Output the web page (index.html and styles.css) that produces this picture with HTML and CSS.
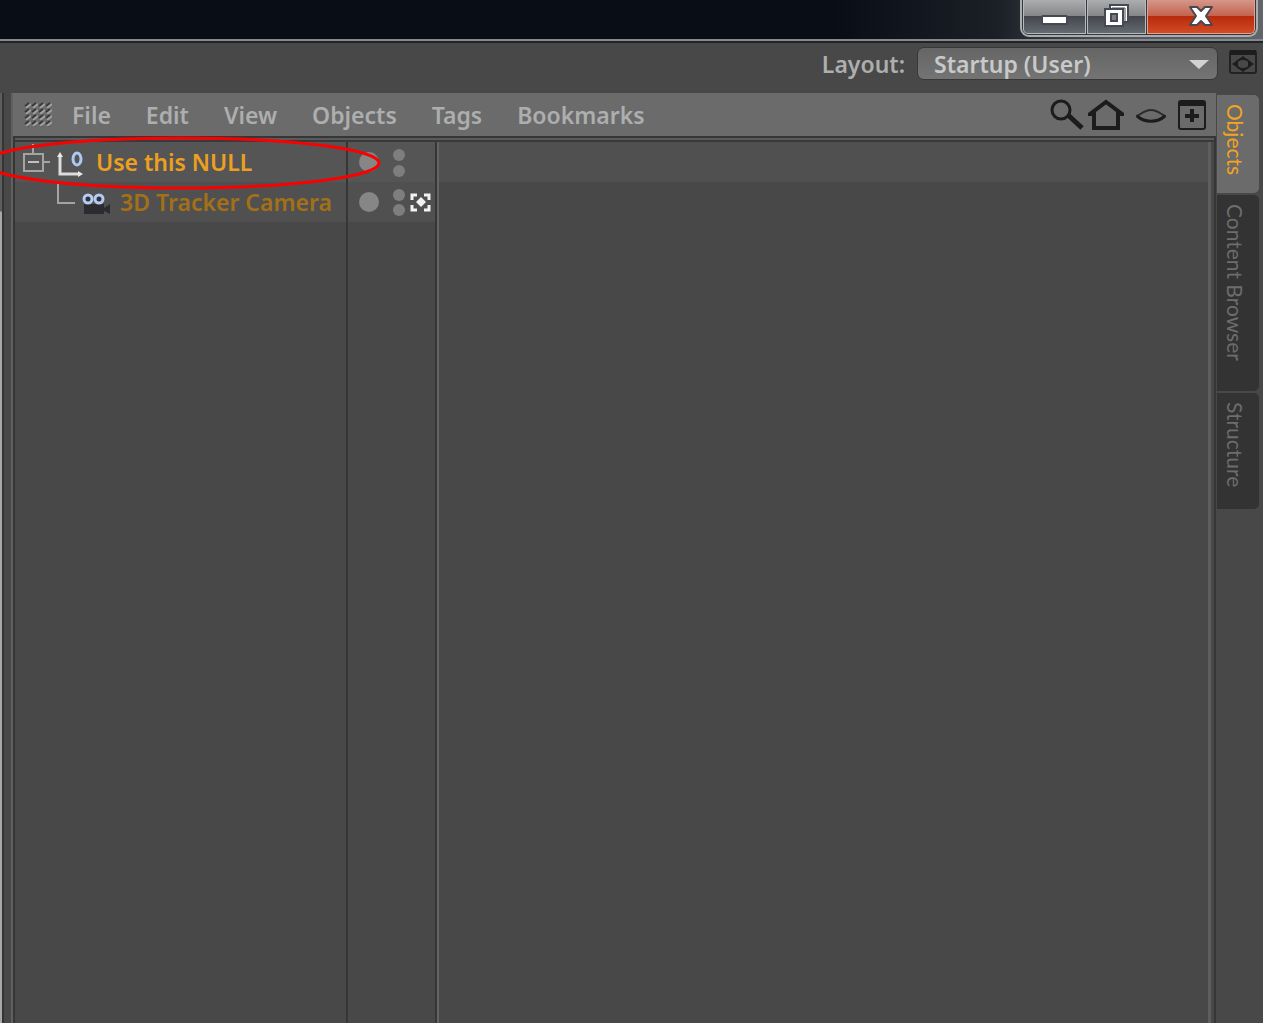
FILE: index.html
```html
<!DOCTYPE html>
<html lang="en">
<head>
    <meta charset="UTF-8">
    <meta name="viewport" content="width=device-width, initial-scale=1.0">
    <title>Object Manager</title>
    <link rel="stylesheet" href="styles.css">
</head>
<body>
    <header class="titlebar">
        <div class="window-buttons">
            <button class="win-btn" aria-label="Minimize">
                <svg width="30" height="30" viewBox="0 0 30 30"><rect x="2" y="16" width="25" height="8" rx="1" fill="#fff" stroke="#454954" stroke-width="2"/></svg>
            </button>
            <button class="win-btn" aria-label="Restore">
                <svg width="30" height="30" viewBox="0 0 30 30">
                    <path d="M8 5h18v17h-18z" fill="#fff" stroke="#454954" stroke-width="2"/>
                    <path d="M10 8h13v13" fill="none" stroke="#454954" stroke-width="1"/>
                    <path d="M3 9h18v17H3z" fill="#fff" stroke="#454954" stroke-width="2"/>
                    <rect x="9" y="14" width="6" height="7" fill="#7a7d86" stroke="#454954" stroke-width="2"/>
                </svg>
            </button>
            <button class="win-btn close" aria-label="Close">
                <svg width="30" height="30" viewBox="0 0 30 30"><path d="M4 7h7l4 4 4-4h7l-6 9 6 9h-7l-4-4-4 4H4l6-9z" fill="#fff" stroke="#4b4650" stroke-width="2" stroke-linejoin="round"/></svg>
            </button>
        </div>
    </header>

    <div class="layout-bar">
        <label for="layout">Layout:</label>
        <div class="select-wrap">
            <select id="layout">
                <option>Startup (User)</option>
            </select>
            <svg class="arrow" width="20" height="10" viewBox="0 0 20 10"><path d="M0 0h20l-10 9z" fill="#d2d2d2"/></svg>
        </div>
        <button class="icon-btn" aria-label="Full screen">
            <svg width="28" height="26" viewBox="0 0 28 26">
                <rect x="1" y="2" width="26" height="22" rx="2" fill="#484848" stroke="#222" stroke-width="2"/>
                <path d="M1 1h26v5H1z" fill="#1d1d1d"/>
                <path d="M14 7l5 4H9zM14 23l5-4H9zM3 15l6-4v8zM25 15l-6-4v8z" fill="#1d1d1d"/>
                <ellipse cx="14" cy="15" rx="7" ry="5" fill="none" stroke="#1d1d1d" stroke-width="2"/>
            </svg>
        </button>
    </div>

    <main class="workspace">
        <div class="side-edge"></div>

        <section class="manager">
            <nav class="menu">
                <svg class="grip" width="28" height="25" viewBox="0 0 28 25">
                    <defs>
                        <pattern id="dots" width="7" height="6" patternUnits="userSpaceOnUse">
                            <path d="M1 4l4-3" stroke="#383838" stroke-width="2"/>
                            <path d="M2 6l5-4" stroke="#a0a0a0" stroke-width="2"/>
                        </pattern>
                    </defs>
                    <rect width="28" height="25" fill="url(#dots)"/>
                </svg>
                <button>File</button>
                <button>Edit</button>
                <button>View</button>
                <button>Objects</button>
                <button>Tags</button>
                <button>Bookmarks</button>
                <div class="tools">
                    <button aria-label="Search">
                        <svg width="34" height="32" viewBox="0 0 34 32">
                            <circle cx="11" cy="11" r="9" fill="none" stroke="#1c1c1c" stroke-width="3"/>
                            <path d="M18 16l14 13" stroke="#1c1c1c" stroke-width="5"/>
                        </svg>
                    </button>
                    <button aria-label="Home">
                        <svg width="36" height="32" viewBox="0 0 36 32"><path d="M2 15L18 3l16 12h-4v14H6V15z" fill="none" stroke="#1c1c1c" stroke-width="4"/></svg>
                    </button>
                    <button aria-label="View filter">
                        <svg width="30" height="32" viewBox="0 0 30 32">
                            <path d="M0 17c4 0 7-6 15-6s11 6 15 6" fill="none" stroke="#2b2b2b" stroke-width="2"/>
                            <path d="M1 17c8 7 20 7 28 0" fill="none" stroke="#1c1c1c" stroke-width="3"/>
                        </svg>
                    </button>
                    <button aria-label="New panel">
                        <svg width="28" height="32" viewBox="0 0 28 32">
                            <rect x="1" y="2" width="26" height="28" rx="2" fill="none" stroke="#1c1c1c" stroke-width="2"/>
                            <path d="M1 2h26v5H1z" fill="#1c1c1c"/>
                            <path d="M14 10v13M7 17h14" stroke="#1c1c1c" stroke-width="4"/>
                        </svg>
                    </button>
                </div>
            </nav>

            <div class="tree">
                <div class="names">
                    <div class="row selected">
                        <svg width="81" height="40" viewBox="0 0 81 40">
                            <path d="M18 2v10M28 20h7" stroke="#a4a4a4" stroke-width="2"/>
                            <rect x="9" y="12" width="19" height="17" fill="none" stroke="#a4a4a4" stroke-width="2"/>
                            <path d="M13 20h11" stroke="#c0c0c0" stroke-width="2"/>
                            <path d="M45 14v18h20" fill="none" stroke="#dcdcdc" stroke-width="3"/>
                            <path d="M42 15l3-5 3 5zM63 29l5 3-5 3z" fill="#e8e8e8"/>
                            <ellipse cx="62" cy="17" rx="4" ry="6" fill="none" stroke="#adc8f2" stroke-width="3"/>
                        </svg>
                        <span>Use this NULL</span>
                    </div>
                    <div class="row child">
                        <svg width="105" height="40" viewBox="0 0 105 40">
                            <path d="M43 1v20h17" fill="none" stroke="#a4a4a4" stroke-width="2"/>
                            <path d="M69 22h20v4l6-4v10l-6-3v3H69z" fill="#2c2c30"/>
                            <circle cx="73" cy="17" r="4" fill="#333" stroke="#b4ccf4" stroke-width="3"/>
                            <circle cx="84" cy="17" r="4" fill="#333" stroke="#b4ccf4" stroke-width="3"/>
                        </svg>
                        <span>3D Tracker Camera</span>
                    </div>
                </div>
                <div class="flags">
                    <div class="row selected">
                        <svg width="86" height="40" viewBox="0 0 86 40">
                            <circle cx="21" cy="20" r="10" fill="#868686"/>
                            <circle cx="51" cy="13" r="6" fill="#7e7e7e"/>
                            <circle cx="51" cy="29" r="6" fill="#7e7e7e"/>
                        </svg>
                    </div>
                    <div class="row child">
                        <svg width="86" height="40" viewBox="0 0 86 40">
                            <circle cx="21" cy="20" r="10" fill="#868686"/>
                            <circle cx="51" cy="13" r="6" fill="#7e7e7e"/>
                            <circle cx="51" cy="28" r="6" fill="#7e7e7e"/>
                            <path d="M64 18v-5h5M76 13h5v5M81 23v5h-5M69 28h-5v-5" fill="none" stroke="#f2f2f2" stroke-width="3"/>
                            <path d="M73 15l5 5-5 5-5-5z" fill="#f2f2f2"/>
                        </svg>
                    </div>
                </div>
                <div class="tags">
                    <div class="row"></div>
                </div>
                <svg class="marker" width="400" height="60" viewBox="0 0 400 60"><ellipse cx="197" cy="30" rx="197" ry="25" fill="none" stroke="#fb0000" stroke-width="3"/></svg>
            </div>
        </section>

        <aside class="tabs">
            <button class="active">Objects</button>
            <button class="browser">Content Browser</button>
            <button class="structure">Structure</button>
        </aside>
    </main>
</body>
</html>
```
FILE: styles.css
```css
* {
    box-sizing: border-box;
}
body {
    margin: 0;
    height: 100vh;
    display: flex;
    flex-direction: column;
    overflow: hidden;
    background: #484848;
    color: #adaeae;
    font-family: "Noto Sans", "Open Sans", sans-serif;
    font-size: 23px;
    font-weight: 600;
}
button, select {
    font: inherit;
    color: inherit;
    border: none;
    padding: 0;
    background: none;
}
svg {
    display: block;
    flex: none;
}

/* title bar */
.titlebar {
    height: 43px;
    flex: none;
    display: flex;
    justify-content: flex-end;
    align-items: flex-start;
    padding-right: 5px;
    background: linear-gradient(90deg, #090d16 0%, #090d16 66%, #1b2027 79%, #50555a 88%, #60656a 100%);
    border-bottom: 2px solid #222528;
    box-shadow: inset 0 -2px #85898d;
}
.window-buttons {
    display: flex;
    height: 37px;
    padding: 0 1px 1px;
    background: #34373b;
    border: 2px solid #a9adaf;
    border-top: none;
    border-radius: 0 0 9px 9px;
}
.win-btn {
    width: 63px;
    display: flex;
    justify-content: center;
    border: 1px solid #b7babe;
    border-top: none;
    background: linear-gradient(#acadae 0%, #858789 47%, #42464c 48%, #656970 100%);
}
.win-btn:first-child {
    border-radius: 0 0 0 5px;
}
.win-btn + .win-btn {
    width: 59px;
    margin-left: 1px;
}
.win-btn + .close {
    width: 108px;
    border-color: #e4a193;
    border-radius: 0 0 5px 0;
    background: linear-gradient(#d4978a 0%, #c46450 47%, #b72a0b 48%, #d14a25 100%);
}

/* layout chooser */
.layout-bar {
    height: 50px;
    flex: none;
    display: flex;
    align-items: flex-start;
    justify-content: flex-end;
    padding: 4px 6px 0 0;
}
.layout-bar label {
    line-height: 34px;
    margin-right: 12px;
}
.select-wrap {
    position: relative;
    width: 301px;
    margin-right: 11px;
}
.select-wrap select {
    appearance: none;
    display: block;
    width: 100%;
    height: 33px;
    padding-left: 16px;
    border: 1px solid #383838;
    border-radius: 7px;
    background: linear-gradient(#656565, #747474);
    color: #c8c9c9;
}
.select-wrap .arrow {
    position: absolute;
    right: 9px;
    top: 13px;
    pointer-events: none;
}
.icon-btn {
    padding-top: 2px;
}

/* workspace */
.workspace {
    flex: 1;
    min-height: 0;
    display: flex;
}
.side-edge {
    width: 4px;
    background: linear-gradient(#5d5d5d 118px, #a8a8a8 119px);
    border-right: 2px solid #343434;
    margin-right: 7px;
}
.manager {
    flex: 1;
    display: flex;
    flex-direction: column;
    border-left: 2px solid #606060;
}
.menu {
    height: 43px;
    flex: none;
    display: flex;
    align-items: center;
    gap: 35px;
    padding: 0 10px 0 11px;
    background: #6b6b6b;
}
.menu .grip {
    margin-right: -15px;
}
.tools {
    margin-left: auto;
    display: flex;
    gap: 7px;
}
.tools button:nth-child(2) {
    margin-left: -3px;
}
.tools button:nth-child(3) {
    margin: 0 5px;
}
.tree {
    flex: 1;
    position: relative;
    display: flex;
    border-top: 2px solid #363636;
    border-left: 2px solid #363636;
    border-right: 2px solid #363636;
    padding-top: 4px;
    box-shadow: inset 0 2px #5a5a5a, inset 0 4px #393939;
}
.names {
    width: 333px;
    border-right: 2px solid #363636;
}
.flags {
    width: 89px;
    border-right: 2px solid #363636;
}
.tags {
    flex: 1;
    border-left: 2px solid #646464;
    border-right: 3px solid #5e5e5e;
    margin-right: 3px;
}
.row {
    height: 40px;
    display: flex;
    align-items: center;
    background: #505050;
    white-space: nowrap;
}
.names .selected, .flags .selected {
    background: #555;
}
.names .selected {
    color: #eda01e;
}
.names .child {
    color: #a37017;
}
.marker {
    position: absolute;
    left: -30px;
    top: -5px;
    pointer-events: none;
}

/* vertical tabs */
.tabs {
    width: 47px;
    padding: 2px 4px 0 1px;
    display: flex;
    flex-direction: column;
    gap: 2px;
}
.tabs button {
    writing-mode: vertical-rl;
    text-align: left;
    width: 42px;
    padding: 9px 7px 0 0;
    background: #333;
    color: #6d6d6d;
    font-family: Lato, sans-serif;
    font-size: 21px;
    font-weight: 400;
    line-height: 32px;
    border-radius: 0 5px 5px 0;
}
.tabs .active {
    height: 98px;
    background: #6b6b6b;
    color: #f5a51d;
}
.tabs .browser {
    height: 196px;
}
.tabs .structure {
    height: 116px;
}
```
